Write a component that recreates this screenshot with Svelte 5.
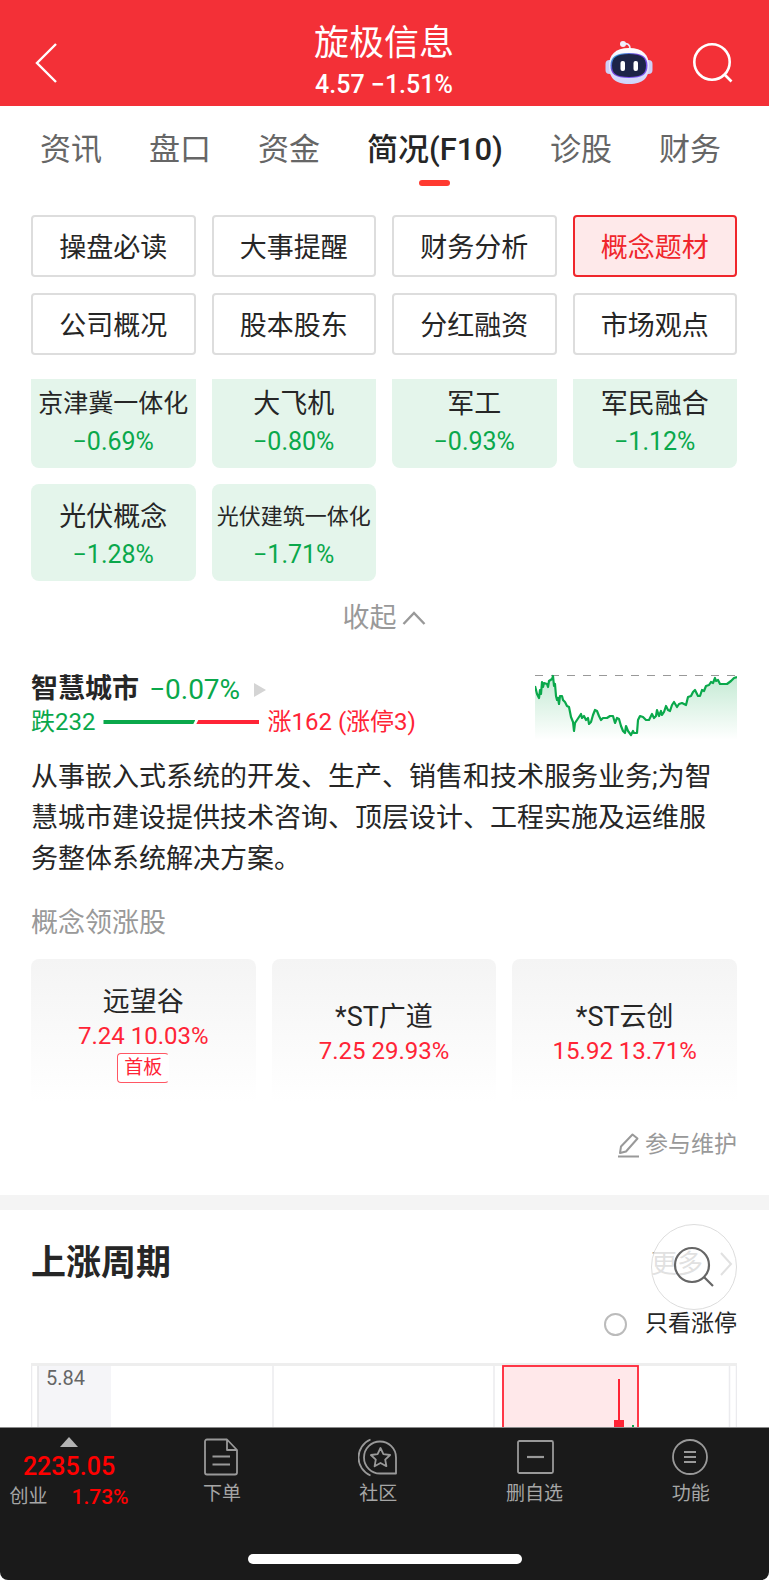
<script>
	const tabs = ['资讯', '盘口', '资金', '简况(F10)', '诊股', '财务'];
	let activeTab = $state('简况(F10)');

	const sections = [
		'操盘必读', '大事提醒', '财务分析', '概念题材',
		'公司概况', '股本股东', '分红融资', '市场观点'
	];
	let activeSection = $state('概念题材');

	const concepts = [
		{ name: '京津冀一体化', change: '−0.69%' },
		{ name: '大飞机', change: '−0.80%' },
		{ name: '军工', change: '−0.93%' },
		{ name: '军民融合', change: '−1.12%' },
		{ name: '光伏概念', change: '−1.28%' },
		{ name: '光伏建筑一体化', change: '−1.71%' }
	];

	const leaders = [
		{ name: '远望谷', price: '7.24', change: '10.03%', tag: '首板' },
		{ name: '*ST广道', price: '7.25', change: '29.93%' },
		{ name: '*ST云创', price: '15.92', change: '13.71%' }
	];

	const falling = 232;
	const rising = 162;
	const fallShare = (falling / (falling + rising)) * 100;

	let onlyLimitUp = $state(false);

	// Intraday line of the sector, in the sparkline's own 202x66 box
	const trend = [
		[0, 12], [2, 20], [4, 24], [5, 16], [6, 20], [7, 8], [8, 13], [9, 9], [12, 10], [13, 13],
		[14, 7], [17, 5], [18, 2], [19, 12], [20, 10], [21, 22], [22, 26], [23, 24], [24, 30], [25, 22],
		[27, 22], [28, 26], [30, 28], [32, 32], [34, 33], [36, 43], [38, 48], [39, 57], [40, 49], [42, 46],
		[44, 43], [46, 40], [47, 44], [49, 42], [51, 46], [53, 44], [54, 50], [56, 48], [58, 41], [60, 36],
		[62, 37], [64, 42], [66, 46], [68, 44], [72, 44], [75, 42], [78, 42], [80, 49], [82, 44], [84, 45],
		[86, 52], [88, 57], [90, 59], [91, 52], [93, 57], [96, 61], [98, 57], [99, 59], [102, 59], [103, 46],
		[105, 42], [108, 43], [111, 46], [114, 46], [117, 40], [119, 44], [121, 42], [122, 36], [124, 42], [126, 37],
		[127, 41], [129, 38], [131, 32], [133, 36], [135, 37], [137, 31], [139, 28], [142, 33], [144, 30], [147, 29],
		[149, 30], [151, 31], [153, 23], [156, 22], [158, 18], [160, 16], [163, 22], [165, 22], [167, 16], [169, 17],
		[171, 12], [174, 11], [176, 8], [178, 9], [180, 4], [181, 7], [183, 6], [185, 10], [192, 10], [196, 7],
		[199, 4], [202, 3]
	];
	const trendPoints = trend.map((p) => p.join(',')).join(' ');

	/**
	 * Long names get a smaller size so that they stay on one line
	 * @param {string} name
	 */
	function nameSize(name) {
		if (name.length > 6) return 'small';
		if (name.length > 5) return 'medium';
		return 'regular';
	}
</script>

<div class="app">
	<header class="topbar">
		<button class="icon-button topbar__back" aria-label="返回">
			<svg width="24" height="44" viewBox="0 0 24 44" fill="none" stroke="#fff" stroke-width="2.400">
				<path d="M21 3 2 22 21 41" />
			</svg>
		</button>
		<div class="topbar__stock">
			<h1>旋极信息</h1>
			<p>4.57 −1.51%</p>
		</div>
		<div class="topbar__actions">
			<button class="icon-button" aria-label="智能助手">
				<svg width="48" height="46" viewBox="0 0 48 46">
					<defs>
						<linearGradient id="shell" x1="0" y1="0" x2="0" y2="1">
							<stop offset="0" stop-color="#fff" />
							<stop offset="0.6" stop-color="#e4e2fa" />
							<stop offset="1" stop-color="#cdd3fb" />
						</linearGradient>
						<linearGradient id="visor" x1="0" y1="0" x2="1" y2="1">
							<stop offset="0" stop-color="#20bcd8" />
							<stop offset="0.4" stop-color="#7441d8" />
							<stop offset="1" stop-color="#7b5cf5" />
						</linearGradient>
					</defs>
					<path d="M18 4c4-1 7 0 7 5" fill="none" stroke="#ece9fb" stroke-width="1.6" />
					<circle cx="18" cy="4" r="3" fill="#f1effc" />
					<rect x="0.5" y="20" width="8" height="14" rx="4" fill="#cfcef6" />
					<rect x="39.5" y="20" width="8" height="14" rx="4" fill="#cfcef6" />
					<path d="M24 8C38 8 44 15 44 26s-5 18-20 18S4 37 4 26 10 8 24 8Z" fill="url(#shell)" />
					<path d="M24 13c13 0 18.500 4 18.500 12.500S38 38 24 38 5.500 34 5.500 25.500 11 13 24 13Z" fill="url(#visor)" />
					<path d="M24 14c12 0 17 3.500 17 11.500S37 37 24 37 7 33.500 7 25.500 12 14 24 14Z" fill="#1d2447" />
					<rect x="15.500" y="21" width="4.500" height="10" rx="2" fill="#fff" />
					<rect x="28.500" y="21" width="4.500" height="10" rx="2" fill="#fff" />
				</svg>
			</button>
			<button class="icon-button" aria-label="搜索">
				<svg width="40" height="42" viewBox="0 0 40 42" fill="none" stroke="#fff" stroke-width="2.600">
					<circle cx="19" cy="20" r="17.700" />
					<path d="m31 32 7.500 7.500" />
				</svg>
			</button>
		</div>
	</header>

	<nav class="tabs" aria-label="个股">
		{#each tabs as tab}
			<button class="tab" class:tab--active={tab === activeTab} onclick={() => (activeTab = tab)}>
				{tab}
			</button>
		{/each}
	</nav>

	<main class="content">
		<section class="panel">
			<div class="grid">
				{#each sections as section}
					<button
						class="section"
						class:section--active={section === activeSection}
						onclick={() => (activeSection = section)}
					>
						{section}
					</button>
				{/each}
			</div>

			<div class="concepts">
				<div class="grid concepts__grid">
					{#each concepts as concept}
						<a class="concept" href="#concept">
							<span class="concept__name concept__name--{nameSize(concept.name)}">{concept.name}</span>
							<span class="concept__change">{concept.change}</span>
						</a>
					{/each}
				</div>
			</div>

			<button class="toggle">
				收起
				<svg width="24" height="16" viewBox="0 0 24 16" fill="none" stroke="#999" stroke-width="2.400">
					<path d="M1.500 14 12 3l10.500 11" />
				</svg>
			</button>

			<div class="sector">
				<div>
					<h2 class="sector__title">
						智慧城市
						<span class="sector__change">−0.07%</span>
						<svg width="12" height="14" viewBox="0 0 12 14"><path d="M0 0 12 7 0 14Z" fill="#d4d4d4" /></svg>
					</h2>
					<div class="breadth">
						<span class="down">跌{falling}</span>
						<span class="breadth__bar">
							<span class="breadth__down" style:width="{fallShare}%"></span>
							<span class="breadth__up"></span>
						</span>
						<span class="up">涨{rising} (涨停3)</span>
					</div>
				</div>
				<svg class="sector__trend" width="202" height="66" viewBox="0 0 202 66" fill="none">
					<defs>
						<linearGradient id="fade" x1="0" y1="0" x2="0" y2="1">
							<stop offset="0" stop-color="#0aa84b" stop-opacity="0.24" />
							<stop offset="1" stop-color="#0aa84b" stop-opacity="0" />
						</linearGradient>
					</defs>
					<path d="M0 1.500H202" stroke="#999" stroke-width="1.200" stroke-dasharray="8 8" />
					<polygon points="0,66 {trendPoints} 202,66" fill="url(#fade)" />
					<polyline points={trendPoints} stroke="#0aa84b" stroke-width="2.200" stroke-linejoin="round" />
				</svg>
			</div>

			<p class="summary">
				从事嵌入式系统的开发、生产、销售和技术服务业务;为智慧城市建设提供技术咨询、顶层设计、工程实施及运维服务整体系统解决方案。
			</p>

			<h3 class="subtitle">概念领涨股</h3>
			<div class="leaders">
				{#each leaders as stock}
					<a class="leader" href="#stock">
						<span class="leader__name">{stock.name}</span>
						<span class="leader__quote">{stock.price} {stock.change}</span>
						{#if stock.tag}
							<span class="leader__tag">{stock.tag}</span>
						{/if}
					</a>
				{/each}
			</div>

			<a class="maintain" href="#maintain">
				<svg width="24" height="26" viewBox="0 0 24 26" fill="none" stroke="#999" stroke-width="2">
					<path d="M1 24.500h21M15.500 2.500l5 4L9 19.500l-6 1.500 1-6.500Z" stroke-linejoin="round" />
				</svg>
				参与维护
			</a>
		</section>

		<section class="panel panel--cycle">
			<div class="cycle__head">
				<h2>上涨周期</h2>
				<a class="more" href="#more">
					更多
					<svg width="14" height="24" viewBox="0 0 14 24" fill="none" stroke="#999" stroke-width="2">
						<path d="m2 1 10 11L2 23" />
					</svg>
				</a>
				<button class="float-search" aria-label="搜索周期">
					<svg width="42" height="42" viewBox="0 0 42 42" fill="none" stroke="#666" stroke-width="2.200">
						<circle cx="19" cy="19" r="17" />
						<path d="m31 31 9 9" />
					</svg>
				</button>
			</div>

			<label class="filter">
				<input type="checkbox" bind:checked={onlyLimitUp} />
				只看涨停
			</label>

			<svg class="chart" viewBox="0 0 706 240" fill="none">
				<rect x="7" y="2" width="73" height="238" fill="#f5f5f8" />
				<path d="M0.500 1V240M242 1V240M463 1V240M698.500 1V240M705.500 1V240" stroke="#ebebee" stroke-width="1.500" />
				<path d="M7 1V240" stroke="#e2e2e5" stroke-width="1.500" />
				<path d="M0 1.500H706" stroke="#eee" stroke-width="3" />
				<rect x="472" y="3" width="135" height="240" fill="#ffe8ea" stroke="#ff2436" stroke-width="1.800" />
				<path d="M588 16V58" stroke="#ff2436" stroke-width="2" />
				<rect x="583" y="57" width="10" height="60" fill="#ff2436" />
				<path d="M602 62V90" stroke="#0aa84b" stroke-width="2" />
				<text x="15" y="22">5.84</text>
			</svg>
		</section>
	</main>

	<footer class="bottombar">
		<div class="bottombar__items">
			<button class="index">
				<svg width="18" height="10" viewBox="0 0 18 10"><path d="M9 0 18 10H0Z" fill="#b3b3b3" /></svg>
				<span class="index__value">2235.05</span>
				<span class="index__row">创业 <b>1.73%</b></span>
			</button>
			<button class="action">
				<svg width="40" height="40" viewBox="0 0 40 40" fill="none" stroke="#999" stroke-width="1.800" stroke-linejoin="round">
					<path d="M25 2.500H5a2 2 0 0 0-2 2v31a2 2 0 0 0 2 2h28a2 2 0 0 0 2-2V13ZM25 2.500V13H35M10.500 19.500H28M10.500 27.500H28" />
				</svg>
				下单
			</button>
			<button class="action">
				<svg width="40" height="40" viewBox="0 0 40 40" fill="none" stroke="#999" stroke-width="1.800" stroke-linejoin="round">
					<path d="M12.500 2.500a19.500 19.500 0 0 0 0 36" />
					<path d="M38 36.500H22A16 16 0 1 1 38 20.500Z" />
					<path d="m22.500 11 2.900 6.100 6.700.9-4.900 4.600 1.200 6.600-5.900-3.200-5.900 3.200 1.200-6.600-4.900-4.600 6.700-.9Z" />
				</svg>
				社区
			</button>
			<button class="action">
				<svg width="40" height="40" viewBox="0 0 40 40" fill="none" stroke="#999" stroke-width="1.800">
					<rect x="3" y="4" width="35" height="32" rx="1.500" />
					<path d="M12 20h17" stroke-width="2.200" />
				</svg>
				删自选
			</button>
			<button class="action">
				<svg width="40" height="40" viewBox="0 0 40 40" fill="none" stroke="#999" stroke-width="1.800">
					<circle cx="19" cy="20" r="17" />
					<path d="M13 15h12M13 20h12M13 25h12" />
				</svg>
				功能
			</button>
		</div>
		<div class="home-indicator"></div>
	</footer>
</div>

<style>
	:global(body) {
		margin: 0;
		background: #fff;
	}

	.app {
		height: 100vh;
		display: flex;
		flex-direction: column;
		font-family: Roboto, 'Noto Sans CJK SC', sans-serif;
		color: #262626;
		background: #fff;
	}

	h1,
	h2,
	h3,
	p {
		margin: 0;
		font-weight: 400;
	}

	button {
		padding: 0;
		border: 0;
		background: none;
		font: inherit;
		color: inherit;
		cursor: pointer;
	}

	a {
		color: inherit;
		text-decoration: none;
	}

	svg {
		display: block;
		flex-shrink: 0;
	}

	/* Top bar */
	.topbar {
		display: grid;
		grid-template-columns: 1fr auto 1fr;
		align-items: center;
		padding: 22px 36px 3px 35px;
		background: #f33037;
		color: #fff;
		text-align: center;
	}

	.topbar__back {
		justify-self: start;
	}

	.topbar h1 {
		font-size: 35px;
		line-height: 44px;
	}

	.topbar p {
		font-size: 25px;
		line-height: 37px;
		font-weight: 500;
	}

	.topbar__actions {
		display: flex;
		align-items: center;
		justify-content: flex-end;
		gap: 40px;
	}

	/* Tabs */
	.tabs {
		display: flex;
		justify-content: space-between;
		padding: 22px 48px 0 40px;
	}

	.tab {
		display: flex;
		flex-direction: column;
		align-items: center;
		gap: 8px;
		font-size: 31px;
		line-height: 44px;
		color: #666;
	}

	.tab::after {
		content: '';
		width: 31px;
		height: 6px;
		border-radius: 3px;
	}

	.tab--active {
		color: #262626;
		font-weight: 500;
	}

	.tab--active::after {
		background: #ff3a30;
	}

	.content {
		flex: 1;
		min-height: 0;
		overflow-y: auto;
		scrollbar-width: none;
	}

	.panel {
		display: flex;
		flex-direction: column;
		padding: 29px 32px 35px 31px;
	}

	.grid {
		display: grid;
		grid-template-columns: repeat(4, 1fr);
		gap: 16px;
	}

	.section {
		height: 62px;
		padding-bottom: 2px;
		border: 2px solid #ddd;
		border-radius: 4px;
		font-size: 27px;
	}

	.section--active {
		border-color: #f0262c;
		background: #fee9ea;
		color: #f0262c;
	}

	/* The first row slides under the section buttons */
	.concepts {
		margin-top: 24px;
		overflow: hidden;
	}

	.concepts__grid {
		margin-top: -8px;
	}

	.concept {
		display: flex;
		flex-direction: column;
		align-items: center;
		padding: 14px 0 7px;
		border-radius: 8px;
		background: #e4f5eb;
		line-height: 38px;
		white-space: nowrap;
	}

	.concept__name--regular {
		font-size: 27px;
	}

	.concept__name--medium {
		font-size: 25px;
	}

	.concept__name--small {
		font-size: 22px;
	}

	.concept__change {
		font-size: 25px;
		color: #0aa84b;
	}

	.toggle {
		display: flex;
		align-items: center;
		align-self: center;
		gap: 5px;
		margin-top: 18px;
		font-size: 27px;
		line-height: 38px;
		color: #999;
	}

	/* Sector */
	.sector {
		display: flex;
		justify-content: space-between;
		align-items: flex-start;
		margin-top: 34px;
	}

	.sector__title {
		display: flex;
		align-items: center;
		gap: 10px;
		font-size: 27px;
		line-height: 37px;
		font-weight: 700;
	}

	.sector__change {
		margin-right: 4px;
		font-size: 28px;
		font-weight: 400;
		color: #0aa84b;
	}

	.sector__trend {
		margin-top: 3px;
	}

	.breadth {
		display: flex;
		align-items: center;
		gap: 8px;
		font-size: 24px;
		line-height: 28px;
	}

	.breadth__bar {
		display: flex;
		gap: 1px;
		width: 156px;
		height: 4px;
	}

	.breadth__down {
		background: #0aa84b;
		clip-path: polygon(0 0, 100% 0, calc(100% - 2px) 100%, 0 100%);
	}

	.breadth__up {
		flex: 1;
		background: #ff2436;
		clip-path: polygon(2px 0, 100% 0, 100% 100%, 0 100%);
	}

	.down {
		color: #0aa84b;
	}

	.up {
		color: #ff2436;
	}

	.summary {
		margin-top: 17px;
		padding-right: 8px;
		font-size: 27px;
		line-height: 41px;
	}

	.subtitle {
		margin-top: 24px;
		font-size: 27px;
		line-height: 38px;
		color: #999;
	}

	.leaders {
		display: grid;
		grid-template-columns: repeat(3, 1fr);
		gap: 16px;
		margin-top: 17px;
	}

	.leader {
		display: flex;
		flex-direction: column;
		align-items: center;
		justify-content: center;
		min-height: 150px;
		border-radius: 8px;
		background: linear-gradient(#f4f4f4, #fff 95%);
		line-height: 34px;
	}

	.leader__name {
		font-size: 27px;
	}

	.leader__quote {
		font-size: 24px;
		color: #ff2436;
	}

	.leader__tag {
		padding: 0 6px;
		border: 1px solid #ff5663;
		border-right-color: transparent;
		border-radius: 4px;
		background: #fff;
		font-size: 19px;
		line-height: 28px;
		color: #ff2436;
	}

	.maintain {
		display: flex;
		align-items: center;
		align-self: flex-end;
		gap: 4px;
		margin-top: 21px;
		font-size: 23px;
		line-height: 30px;
		color: #999;
	}

	/* Rising cycle */
	.panel--cycle {
		padding-top: 29px;
		border-top: 15px solid #f4f4f4;
	}

	.cycle__head {
		position: relative;
		display: flex;
		align-items: center;
		justify-content: space-between;
		line-height: 50px;
	}

	.cycle__head h2 {
		font-size: 35px;
		font-weight: 700;
	}

	.more {
		display: flex;
		align-items: center;
		gap: 16px;
		padding-right: 4px;
		font-size: 26px;
		color: #999;
	}

	.float-search {
		position: absolute;
		top: -15px;
		right: 0;
		display: flex;
		align-items: center;
		justify-content: center;
		width: 86px;
		height: 86px;
		border: 1px solid #ddd;
		border-radius: 50%;
		background: rgba(255, 255, 255, 0.7);
	}

	.filter {
		display: flex;
		align-items: center;
		align-self: flex-end;
		gap: 18px;
		margin-top: 20px;
		font-size: 23px;
		line-height: 30px;
	}

	.filter input {
		appearance: none;
		width: 23px;
		height: 23px;
		margin: 0;
		border: 2px solid #bbb;
		border-radius: 50%;
	}

	.filter input:checked {
		border-color: #f33037;
		background: #f33037;
	}

	.chart {
		width: 100%;
		margin-top: 24px;
	}

	.chart text {
		font-size: 20px;
		fill: #666;
	}

	/* Bottom bar */
	.bottombar {
		padding: 9px 0 16px;
		border-top: 1px solid #8a8a8a;
		border-radius: 0 0 8px 8px;
		background: #1a1a1a;
		color: #a6a6a6;
	}

	.bottombar__items {
		display: flex;
	}

	.index {
		display: flex;
		flex-direction: column;
		align-items: center;
		width: 144px;
		padding-right: 6px;
		box-sizing: border-box;
	}

	.index__value {
		margin-top: 4px;
		font-size: 25px;
		line-height: 32px;
		font-weight: 500;
		color: #f00;
	}

	.index__row {
		display: flex;
		gap: 24px;
		font-size: 19px;
		line-height: 28px;
	}

	.index__row b {
		font-size: 21px;
		font-weight: 500;
		color: #f00;
	}

	.action {
		flex: 1;
		display: flex;
		flex-direction: column;
		align-items: center;
		gap: 2px;
		font-size: 19px;
		line-height: 30px;
	}

	.home-indicator {
		width: 274px;
		height: 10px;
		margin: 43px auto 0;
		border-radius: 5px;
		background: #fff;
	}
</style>
